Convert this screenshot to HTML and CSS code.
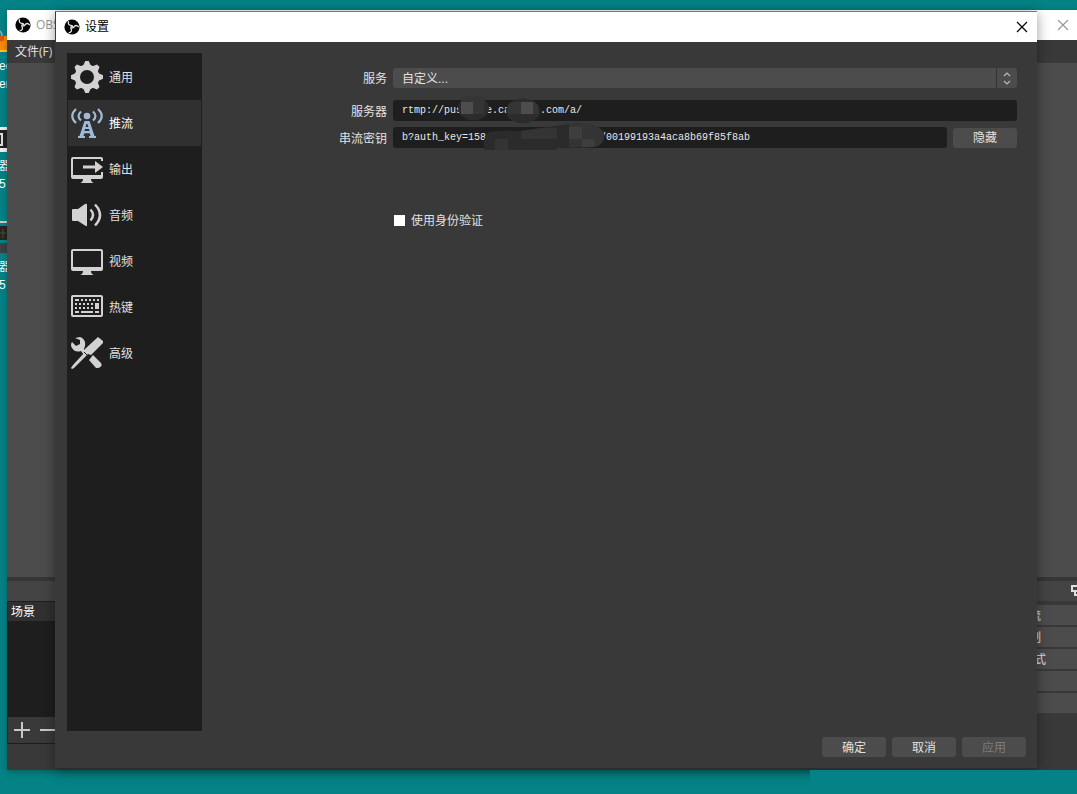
FILE: index.html
```html
<!DOCTYPE html>
<html lang="zh-CN">
<head>
<meta charset="utf-8">
<title>设置</title>
<link rel="stylesheet" href="styles.css">
</head>
<body>
<svg class="defs" aria-hidden="true">
  <symbol id="logo" viewBox="0 0 16 16">
    <circle cx="8" cy="8" r="7.600" fill="#050505"/>
    <path id="blade" fill="none" stroke="#e6e6e6" stroke-width="1.300" d="M4.600 2.200C3.600 5.200 5.200 6.200 6.800 6.300C8.300 6.400 9 7.200 8.900 8.500"/>
    <use href="#blade" transform="rotate(120 8 8)"/>
    <use href="#blade" transform="rotate(240 8 8)"/>
  </symbol>
  <symbol id="close" viewBox="0 0 12 12"><path d="M1 1L11 11M11 1L1 11" fill="none" stroke="currentColor" stroke-width="1.200"/></symbol>
</svg>

<main class="desktop">
  <div class="shortcuts">
    <svg class="shortcut-art" width="7" height="230" viewBox="0 30 7 230" aria-hidden="true">
      <path d="M0 31Q3 34 1 38" fill="none" stroke="#9ab" stroke-width="1.500"/>
      <path d="M0 36H7V52H0Z" fill="#f58a0b"/><path d="M0 41Q5 43 4 36H0Z" fill="#d65a0c"/><path d="M0 50H7V52H0Z" fill="#ffc42e"/>
      <path d="M0 127H7V152H0Z" fill="#eee"/><path d="M0 130H7V148H0Z" fill="#222"/><path d="M0 134H2V145H0" fill="none" stroke="#ddd" stroke-width="2"/>
      <path d="M0 221H7V223H0Z" fill="#ccc"/><path d="M0 226H7V240H0Z" fill="#26261f"/><path d="M0 243H7V253H0Z" fill="#3b4145"/><path d="M0 233H6M3 229V238" stroke="#4a4a40"/>
    </svg>
    <span class="caption caption-first">ec<br>er</span>
    <span class="caption caption-second">器<br>5</span>
    <span class="caption caption-third">器<br>5</span>
  </div>

  <section class="studio" aria-label="OBS">
    <header class="titlebar inactive">
      <svg class="logo"><use href="#logo"/></svg><span class="title">OBS</span>
      <button class="close" aria-label="关闭主窗口"><svg><use href="#close"/></svg></button>
    </header>
    <nav class="menubar"><button class="menu">文件(F)</button></nav>
    <div class="preview"></div>
    <div class="docks">
      <div class="dock">
        <div class="dock-top"></div>
        <div class="scenes">
          <h2 class="dock-title">场景</h2>
          <div class="scene-list"></div>
          <div class="scene-tools">
            <button class="tool" aria-label="添加"><svg width="16" height="16" viewBox="0 0 16 16"><path d="M0 8H16M8 0V16"/></svg></button>
            <button class="tool" aria-label="移除"><svg width="16" height="16" viewBox="0 0 16 16"><path d="M0 8H16"/></svg></button>
          </div>
        </div>
      </div>
      <div class="controls">
        <div class="controls-title"><svg width="7" height="14" viewBox="0 0 7 14" aria-hidden="true"><path d="M7 2H2V7H7M5 7V11H7" fill="none" stroke="#ddd" stroke-width="2"/></svg></div>
        <button class="control early">流</button>
        <button class="control early">制</button>
        <button class="control">式</button>
        <button class="control" aria-label="设置"></button>
        <button class="control" aria-label="退出"></button>
      </div>
    </div>
  </section>
  <div class="desktop-patch"></div>

  <section class="dialog" role="dialog" aria-labelledby="dialog-title">
    <header class="titlebar">
      <svg class="logo"><use href="#logo"/></svg><h1 class="title" id="dialog-title">设置</h1>
      <button class="close" aria-label="关闭"><svg><use href="#close"/></svg></button>
    </header>
    <div class="dialog-body">
      <nav class="sidebar">
        <button class="tab">
          <svg class="icon" viewBox="0 0 32 32"><circle cx="16" cy="16" r="9.700" fill="none" stroke="currentColor" stroke-width="5.400"/><path id="teeth" d="M14.300 0H17.700L20 5H12ZM14.300 32H17.700L20 27H12Z"/><use href="#teeth" transform="rotate(45 16 16)"/><use href="#teeth" transform="rotate(90 16 16)"/><use href="#teeth" transform="rotate(135 16 16)"/></svg>
          <span>通用</span></button>
        <button class="tab selected">
          <svg class="icon" viewBox="0 0 32 32"><circle cx="16" cy="9" r="3.300"/><g fill="none" stroke="currentColor" stroke-width="2.200"><path d="M5 2Q-2.500 9 5 16M27 2Q34.500 9 27 16M10 4.500Q5 9 10 13.500M22 4.500Q27 9 22 13.500"/></g><path fill-rule="evenodd" d="M13.500 14h5l5 15H25v2h-7v-2h1.600l-1-2.800h-5.200l-1 2.800H14v2H7v-2h1.500ZM15.500 17l-.9 3h2.800l-.9-3ZM14 22l-.6 2h5.200l-.6-2Z"/></svg>
          <span>推流</span></button>
        <button class="tab">
          <svg class="icon" viewBox="0 -1 32 32"><path d="M2 3H30Q32 3 32 5V7H30V5H2V21H30V18H32V23Q32 25 30 25H20Q20 28 23 29H9Q12 28 12 25H2Q0 25 0 23V5Q0 3 2 3ZM12 11.500H24V7L32 13L24 19V14.500H12Z"/></svg>
          <span>输出</span></button>
        <button class="tab">
          <svg class="icon" viewBox="0 0 32 32"><path d="M2 10H7L14 5Q16 4 16 6V26Q16 28 14 26.500L7 22H2Q1 22 1 21V11Q1 10 2 10Z"/><path fill="none" stroke="currentColor" stroke-width="2.500" d="M19.500 10.500Q24.500 16 19.500 21.500M24 5.500Q34 16 24 26.500"/></svg>
          <span>音频</span></button>
        <button class="tab">
          <svg class="icon" viewBox="0 -1 32 32"><path fill-rule="evenodd" d="M2 3H30Q32 3 32 5V23Q32 25 30 25H20Q20 28 23 29H9Q12 28 12 25H2Q0 25 0 23V5Q0 3 2 3ZM2 5V21H30V5Z"/></svg>
          <span>视频</span></button>
        <button class="tab">
          <svg class="icon" viewBox="0 -1 32 32"><rect x="1" y="4" width="30" height="20" rx="1" fill="none" stroke="currentColor" stroke-width="2"/><g fill="none" stroke="currentColor" stroke-width="2"><path d="M4 8H8M10 8H12M14 8H16M18 8H20M22 8H24M26 8H28M4 12H6M8 12H10M12 12H14M16 12H18M20 12H22M4 16H6M8 16H10M12 16H14M16 16H18M20 16H22M4 20H8M10 20H22M24 20H28"/></g><path d="M24 11H28V17H24Z"/></svg>
          <span>热键</span></button>
        <button class="tab">
          <svg class="icon" viewBox="0 0 32 32"><path d="M4 1L9 0Q15 2 14 9L13 12L16 15L13 18L10 14Q4 16 1 11Q-1 8 1 5L5 9L9 7L9 3ZM27 0L32 4V6L20 18L17 17L3 31L1 32L0 31L2 28L14 15L14 12ZM18 23L22 18L30 26Q32 30 27 31H25Z"/><path d="M13 15L17 19" stroke="#1e1e1e" stroke-width="1"/></svg>
          <span>高级</span></button>
      </nav>
      <form class="form">
        <div class="row row-service">
          <label for="service">服务</label>
          <div class="select-box">
            <select id="service"><option>自定义...</option></select>
            <svg class="arrows" width="21" height="20" viewBox="0 0 21 20" aria-hidden="true"><path d="M.5 0V20" stroke="#333"/><path d="M8 8L11 5L14 8M8 13L11 16L14 13" fill="none" stroke="#bbb" stroke-width="1.200"/></svg>
          </div>
        </div>
        <div class="row">
          <label for="server">服务器</label>
          <div class="field">
            <input id="server" class="text" type="text" value="rtmp://pus    e.ca     .com/a/">
            <svg class="smudge smudge-server" width="84" height="28" viewBox="0 0 84 28" aria-hidden="true">
              <clipPath id="server-blobs"><ellipse cx="15.500" cy="12" rx="15.500" ry="12.500"/><ellipse cx="65" cy="15" rx="17" ry="12.500"/></clipPath>
              <g clip-path="url(#server-blobs)"><path fill="#2c2c2c" d="M0 0H84V28H0Z"/><path fill="#353535" d="M3 0H26V18H3ZM50 6H80V18H50Z"/><path fill="#4d4d4d" d="M3 6H15V18H3ZM63 6H75V18H63Z"/></g>
            </svg>
          </div>
        </div>
        <div class="row">
          <label for="key">串流密钥</label>
          <div class="field">
            <input id="key" class="text" type="text" value="b?auth_key=158                   /00199193a4aca8b69f85f8ab">
            <svg class="smudge smudge-key" width="122" height="28" viewBox="0 0 122 28" aria-hidden="true">
              <clipPath id="key-blob"><path d="M6 9Q12 7 38 8L85 1Q115-2 121 10Q122 22 111 24L74 25V27H2Q-2 16 6 9Z"/></clipPath>
              <g clip-path="url(#key-blob)"><path fill="#2b2b2b" d="M0 0H122V28H0Z"/><path fill="#343434" d="M12 16H25V28H12ZM38 5H74V16H38ZM86 0H122V25H86Z"/><path fill="#3e3e3e" d="M86 4H99V16H86ZM99 16H111V25H99Z"/></g>
            </svg>
          </div>
          <button class="button" type="button">隐藏</button>
        </div>
        <div class="auth"><input id="auth" class="check" type="checkbox"><label for="auth">使用身份验证</label></div>
      </form>
    </div>
    <footer class="actions">
      <button class="button">确定</button>
      <button class="button">取消</button>
      <button class="button" disabled>应用</button>
    </footer>
  </section>
</main>
</body>
</html>
```
FILE: styles.css
```css
* { box-sizing: border-box; }
body, h1, h2 { margin: 0; }
body, button, input, select {
  font: 12px/18px "Liberation Sans", "Noto Sans CJK SC", sans-serif;
}
button { border: 0; padding: 0; color: inherit; background: none; }
.defs { position: absolute; width: 0; height: 0; }

.desktop {
  position: relative;
  height: 100vh;
  min-height: 480px;
  overflow: hidden;
  background: #048286;
  color: #e1e1e1;
}

/* Desktop shortcuts */
.shortcuts { position: absolute; inset: 0 auto 0 0; width: 7px; overflow: hidden; color: #fff; }
.shortcut-art { position: absolute; top: 30px; left: 0; }
.caption { position: absolute; left: -1px; }
.caption-first { top: 57px; }
.caption-second { top: 157px; }
.caption-third { top: 258px; }

/* Shared title bar */
.titlebar {
  display: flex;
  align-items: center;
  flex: none;
  height: 30px;
  padding: 0 9px 0 8px;
  gap: 5px;
  background: #fff;
  color: #000;
}
.logo { width: 16px; height: 16px; }
.title { font-size: 12px; font-weight: 400; line-height: 18px; }
.close { display: flex; margin-left: auto; }
.close svg { width: 12px; height: 12px; }
.inactive { padding-right: 8px; color: #999; }
.inactive .title { font-family: "Open Sans", sans-serif; }

/* Main window */
.studio {
  position: absolute;
  inset: 10px 0 24px 7px;
  display: flex;
  flex-direction: column;
  background: #393939;
  box-shadow: 0 2px 6px rgb(0 0 0 / 25%);
}
.menubar { height: 23px; padding: 3px 8px; }
.menu { font-family: "Open Sans", "Noto Sans CJK SC", sans-serif; }
.preview { flex: 1; background: #4c4c4c; }
.docks { display: flex; justify-content: space-between; height: 193px; border-top: 4px solid #363636; }
.dock { width: 200px; }
.dock-top { height: 20px; background: #444; }
.scenes { height: 143px; border: 1px solid #1e1e1e; display: flex; flex-direction: column; }
.dock-title { height: 19px; padding-left: 3px; background: #303030; color: #fff; font-size: 12px; font-weight: 400; line-height: 20px; }
.scene-list { flex: 1; background: #1e1e1e; }
.scene-tools { display: flex; gap: 10px; height: 26px; padding: 5px 6px; }
.tool { width: 16px; height: 16px; }
.tool svg { display: block; fill: none; stroke: #c8c8c8; stroke-width: 2; }
.controls { display: flex; flex-direction: column; gap: 2px; width: 80px; }
.controls-title { display: flex; justify-content: flex-end; align-items: center; height: 20px; margin-bottom: 2px; background: #444; }
.control { height: 20px; padding: 1px 0 0 37px; background: #4c4c4c; text-align: left; }
.early { padding-left: 32px; }
.desktop-patch { position: absolute; inset: auto 0 0 810px; height: 24px; background: #048286; z-index: 2; }

/* Settings dialog */
.dialog {
  position: absolute;
  inset: 11px 40px 25px 55px;
  display: flex;
  flex-direction: column;
  border: solid #3a3a3a;
  border-width: 1px 0 0 1px;
  border-top-color: #777;
  background: #393939;
  box-shadow: 0 2px 12px rgb(0 0 0 / 40%);
}
.dialog-body { flex: 1; display: flex; padding: 11px 20px 0 11px; }
.sidebar { width: 135px; padding: 1px; background: #1e1e1e; flex: none; }
.tab { display: flex; align-items: center; gap: 6px; width: 100%; height: 46px; padding-left: 3px; }
.tab span { padding-top: 2px; }
.icon { width: 32px; height: 32px; fill: currentColor; color: #d2d2d2; }
.selected { background: #303030; color: #fff; }
.selected .icon { color: #a0bad7; }

.form { flex: 1; min-width: 0; padding-top: 15px; }
.row { display: flex; align-items: center; gap: 6px; height: 21px; margin-bottom: 6px; }
.row > label { width: 185px; flex: none; padding-top: 2px; text-align: right; }
.row-service { height: 20px; margin-bottom: 12px; }
.select-box { position: relative; flex: 1; display: flex; }
.arrows { position: absolute; right: 0; top: 0; pointer-events: none; }
select {
  appearance: none;
  width: 100%;
  height: 20px;
  padding: 2px 9px 0;
  border: 0;
  border-radius: 3px;
  background: #4c4c4c;
  color: #e1e1e1;
}
.field { position: relative; flex: 1; display: flex; }
.text {
  width: 100%;
  height: 21px;
  padding: 0 9px;
  border: 0;
  border-radius: 3px;
  background: #1e1e1e;
  color: #e8e8e8;
  font-family: "Liberation Mono", monospace;
  font-size: 10px;
}
.smudge { position: absolute; pointer-events: none; }
.smudge-server { left: 65px; top: -4px; }
.smudge-key { left: 90px; top: -4px; }
.button { width: 64px; height: 20px; padding-top: 1px; border-radius: 3px; background: #4c4c4c; flex: none; }
.button:disabled { color: #7c7c7c; }
.auth { display: flex; align-items: center; gap: 6px; margin: 62px 0 0 192px; }
.auth label { padding-top: 2px; }
.check { appearance: none; width: 11px; height: 11px; margin: 0; background: #fff; }
.check:checked { background: #a0bad7; }
.actions { display: flex; justify-content: flex-end; gap: 6px; padding: 6px 11px 11px; border-bottom: 1px solid #2d2d2d; }
```
